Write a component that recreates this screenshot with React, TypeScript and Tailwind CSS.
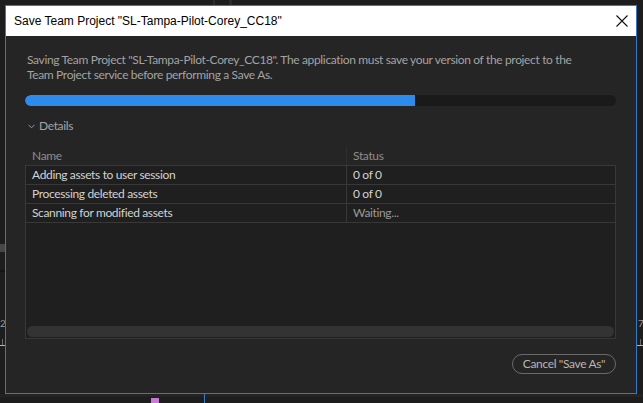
export default function App() {
  const rows = [
    { name: "Adding assets to user session", status: "0 of 0", dim: false },
    { name: "Processing deleted assets", status: "0 of 0", dim: false },
    { name: "Scanning for modified assets", status: "Waiting...", dim: true },
  ];
  return (
    <div className="relative w-[643px] h-[403px] overflow-hidden bg-[#1d1d1d] font-['Lato',sans-serif]">
      {/* desktop background bits */}
      <div className="absolute left-[213px] top-0 w-[2px] h-[6px] bg-[#2c2c2c]" />
      <div className="absolute left-[229px] top-0 w-[3px] h-[6px] bg-[#2a2a2a]" />
      <div className="absolute left-0 top-[244px] w-[6px] h-[8px] bg-[#474747]" />
      <div className="absolute left-0 top-[270px] w-[6px] h-[2px] bg-[#151515]" />
      <div className="absolute left-0 top-[318px] text-[10px] leading-[10px] text-[#9a9a9a]">2</div>
      <div className="absolute left-[638px] top-[318px] text-[10px] leading-[10px] text-[#9a9a9a]">7</div>
      <div className="absolute left-0 top-[345px] w-[6px] h-[1px] bg-[#c9c83a]" />
      <div className="absolute left-[637px] top-[345px] w-[6px] h-[1px] bg-[#c9c83a]" />
      <div className="absolute left-[2px] top-[339px] w-[1px] h-[6px] bg-[#6a6a6a]" />
      <div className="absolute left-[640px] top-[339px] w-[1px] h-[6px] bg-[#6a6a6a]" />
      <div className="absolute left-0 top-[394px] w-[643px] h-[3px] bg-[#232323]" />
      <div className="absolute left-[151px] top-[398px] w-[8px] h-[5px] bg-[#c97bd6]" />
      <div className="absolute left-[204px] top-[394px] w-[1px] h-[9px] bg-[#3a7cc0]" />

      {/* dialog */}
      <div className="absolute left-[5px] top-[5px] w-[632px] h-[389px] border border-[#2f7cc4] bg-[#252525] flex flex-col">
        <div className="h-[30px] shrink-0 bg-white flex items-center justify-between pl-[8px] pr-[9px]">
          <span className="text-[12px] text-black font-['Liberation_Sans',sans-serif]">
            Save Team Project "SL-Tampa-Pilot-Corey_CC18"
          </span>
          <svg width="12" height="12" viewBox="0 0 12 12" className="mr-[-1px]">
            <path d="M0.5 0.5 L11.5 11.5 M11.5 0.5 L0.5 11.5" stroke="#111" strokeWidth="1.1" fill="none" />
          </svg>
        </div>
        <div className="flex-1 flex flex-col pl-[19px] pr-[20px] pt-[16px] pb-[19px] tracking-[-0.35px]">
          <p className="pl-[2px] text-[12px] leading-[15px] text-[#a3a3a3]">
            Saving Team Project "SL-Tampa-Pilot-Corey_CC18". The application must save your version of the project to the
            <br />
            Team Project service before performing a Save As.
          </p>
          <div className="mt-[13px] h-[11px] rounded-full bg-[#1a1a1a] overflow-hidden">
            <div className="h-full w-[390px] rounded-l-full bg-[#2d8ceb]" />
          </div>
          <div className="mt-[12px] h-[16px] flex items-center text-[12px] text-[#a3a3a3]">
            <svg width="7" height="5" viewBox="0 0 7 5" className="ml-[3px] mr-[4px]">
              <path d="M0.5 0.8 L3.5 3.8 L6.5 0.8" stroke="#9a9a9a" strokeWidth="1" fill="none" />
            </svg>
            <span>Details</span>
          </div>
          <div className="mt-[12px] h-[19px] flex items-center text-[12px] text-[#8e8e8e]">
            <div className="w-[321px] h-full flex items-center pl-[7px]">Name</div>
            <div className="h-full flex items-center pl-[6px] border-l border-[#2f2f2f]">Status</div>
          </div>
          <div className="flex-1 flex flex-col border border-[#383838] bg-[#1f1f1f]">
            {rows.map((r) => (
              <div key={r.name} className="h-[19px] flex items-center border-b border-[#383838] text-[12px]">
                <div className="w-[320px] h-full flex items-center pl-[6px] text-[#d2d2d2]">{r.name}</div>
                <div className={`h-full flex items-center pl-[6px] border-l border-[#383838] ${r.dim ? "text-[#9a9a9a]" : "text-[#d2d2d2]"}`}>
                  {r.status}
                </div>
              </div>
            ))}
            <div className="flex-1" />
            <div className="mx-[1px] mb-[1px] h-[11px] rounded-full bg-[#333333]" />
          </div>
          <div className="mt-[15px] flex justify-end">
            <button className="h-[20px] w-[104px] rounded-full border border-[#6a6a6a] text-[12px] text-[#b5b5b5] flex items-center justify-center">
              Cancel "Save As"
            </button>
          </div>
        </div>
      </div>
    </div>
  );
}
